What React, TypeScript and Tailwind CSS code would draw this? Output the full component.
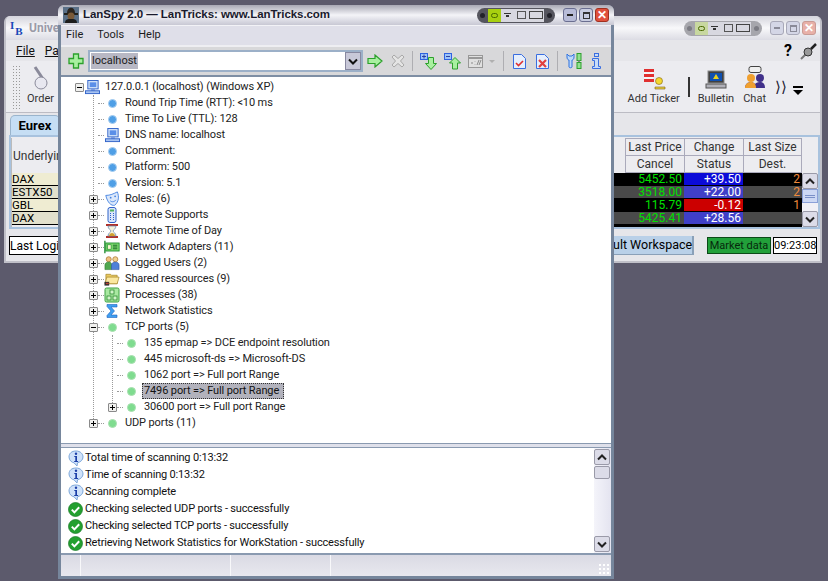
import React from 'react';

const UI = "font-['Liberation_Sans',sans-serif]";

// --- small drawn icons ---
function Dot({ green }: { green?: boolean }) {
  return (
    <span
      className={`block w-[9px] h-[9px] rounded-full border ${
        green ? 'bg-[#7fdc8f] border-[#a8e0b0]' : 'bg-[#4f9fe6] border-[#a6cdf0]'
      }`}
    />
  );
}

function Computer() {
  return (
    <svg width="15" height="15" viewBox="0 0 16 16">
      <rect x="3" y="0.5" width="11" height="9" fill="#cfe0f8" stroke="#2f62c8" />
      <rect x="5" y="2.5" width="7" height="5" fill="#5b8fe8" />
      <rect x="6.5" y="9.5" width="4" height="2" fill="#7c9be0" />
      <rect x="0.5" y="11.5" width="15" height="3" fill="#a8c4f2" stroke="#2f62c8" />
    </svg>
  );
}

function Mask() {
  return (
    <svg width="18" height="18" viewBox="0 0 18 18">
      <path d="M2 5 C7 5 11 3 15 1 C17 6 17 12 12 16 C8 17 4 13 2 5 Z" fill="#dbe8fb" stroke="#3f7fe0" />
      <circle cx="7.5" cy="7.5" r="1" fill="#3f7fe0" />
      <circle cx="12.5" cy="6" r="1" fill="#3f7fe0" />
      <path d="M7 11 C9 13 12 12 13.5 10" fill="none" stroke="#3f7fe0" />
    </svg>
  );
}

function Remote() {
  return (
    <svg width="16" height="16" viewBox="0 0 16 16">
      <rect x="4" y="0.5" width="8" height="15" rx="2" fill="#dbe6fb" stroke="#2f62c8" />
      <rect x="6" y="2.5" width="4" height="2" fill="#50b060" />
      <path d="M6 6.5h1M9 6.5h1M6 8.5h1M9 8.5h1M6 10.5h1M9 10.5h1M6 12.5h1M9 12.5h1" stroke="#2f62c8" />
    </svg>
  );
}

function Hourglass() {
  return (
    <svg width="16" height="16" viewBox="0 0 16 16">
      <path d="M2 1h12v2H2zM2 13h12v2H2z" fill="#b03028" />
      <path d="M4 3h8c0 3-3 4-3 5s3 2 3 5H4c0-3 3-4 3-5S4 6 4 3Z" fill="#f4f0d8" stroke="#5f7fb0" strokeWidth="0.7" />
      <path d="M5 13c0-2 2-3 3-3s3 1 3 3Z" fill="#d0a030" />
    </svg>
  );
}

function NetCard() {
  return (
    <svg width="18" height="16" viewBox="0 0 18 16">
      <path d="M1 1v14" stroke="#1c8a2c" strokeWidth="1.5" />
      <rect x="2" y="3.5" width="15" height="9" fill="#7fdc70" stroke="#1c8a2c" />
      <rect x="4" y="5.5" width="4" height="5" fill="#f6f6d0" stroke="#1c8a2c" strokeWidth="0.7" />
      <path d="M10 6h5M10 8h5M10 10h5" stroke="#116020" />
    </svg>
  );
}

function Users() {
  return (
    <svg width="17" height="16" viewBox="0 0 17 16">
      <circle cx="5" cy="4" r="2.7" fill="#f0c080" stroke="#a06a20" strokeWidth="0.7" />
      <circle cx="12" cy="4" r="2.7" fill="#f0d090" stroke="#a06a20" strokeWidth="0.7" />
      <path d="M1 15V10c0-2 2-3 4-3s3 1 3 3v5Z" fill="#50a850" stroke="#2f7a30" strokeWidth="0.6" />
      <path d="M8 15V10c0-2 2-3 4-3s4 1 4 3v5Z" fill="#4f80d8" stroke="#2f52a0" strokeWidth="0.6" />
    </svg>
  );
}

function Folder() {
  return (
    <svg width="17" height="16" viewBox="0 0 17 16">
      <path d="M2 3h5l1 1h6v9H2Z" fill="#e8c860" stroke="#a08020" strokeWidth="0.7" />
      <path d="M1 13l2-7h13l-2 7Z" fill="#fbe8a0" stroke="#a08020" strokeWidth="0.7" />
      <rect x="0.5" y="11" width="5" height="4" fill="#303030" />
      <rect x="2" y="12" width="3" height="1.5" fill="#c04030" />
    </svg>
  );
}

function Processes() {
  return (
    <svg width="16" height="16" viewBox="0 0 16 16">
      <rect x="1" y="1" width="14" height="14" rx="1.5" fill="#a8e8a0" stroke="#3ca040" />
      <rect x="6" y="3" width="4" height="4" fill="#d0f4c8" stroke="#2c8a30" strokeWidth="0.8" />
      <rect x="3" y="9" width="4" height="4" fill="#d0f4c8" stroke="#2c8a30" strokeWidth="0.8" />
      <rect x="9" y="9" width="4" height="4" fill="#d0f4c8" stroke="#2c8a30" strokeWidth="0.8" />
    </svg>
  );
}

function Sigma() {
  return (
    <svg width="16" height="16" viewBox="0 0 16 16">
      <path d="M3 1.500h10v2.500H7l3.500 4L7 12h6v2.500H3v-2l4-4.500-4-4.500Z" fill="#3f9ff0" stroke="#1f62c0" strokeWidth="0.6" />
    </svg>
  );
}

function InfoBubble() {
  return (
    <svg width="16" height="17" viewBox="0 0 16 17">
      <path d="M8 1C3.500 1 1 3.500 1 7s3 5.500 5 5.800L9 16l.5-3.200C12.500 12 15 10 15 7s-2.500-6-7-6Z" fill="#cfe2fa" stroke="#7ea8da" />
      <circle cx="8" cy="3.800" r="1.200" fill="#1c3fa8" />
      <path d="M6.300 6h2.700v5h1.100v1H6.200v-1h1.100V7H6.300Z" fill="#1c3fa8" />
    </svg>
  );
}

function CheckBall() {
  return (
    <svg width="15" height="15" viewBox="0 0 15 15">
      <circle cx="7.5" cy="7.5" r="7" fill="#23a02f" stroke="#1a7a28" strokeWidth="0.7" />
      <path d="M3.800 7.600l2.600 2.800 4.800-5.200" fill="none" stroke="#ffffff" strokeWidth="2" />
    </svg>
  );
}

function Expander({ open }: { open?: boolean }) {
  return (
    <span className="relative z-10 block w-[9px] h-[9px] bg-[#f0f0ee] border border-[#8a8a8a] rounded-[1px]">
      <span className="absolute left-[1px] top-[3px] w-[5px] h-px bg-black" />
      {!open && <span className="absolute left-[3px] top-[1px] w-px h-[5px] bg-black" />}
    </span>
  );
}

// --- tree ---
type Row = {
  text: string;
  depth: 0 | 1 | 2;
  icon: React.ReactNode;
  exp?: 'plus' | 'minus';
  selected?: boolean;
};

const rows: Row[] = [
  { text: '127.0.0.1 (localhost) (Windows XP)', depth: 0, icon: <Computer />, exp: 'minus' },
  { text: 'Round Trip Time (RTT): <10 ms', depth: 1, icon: <Dot /> },
  { text: 'Time To Live (TTL): 128', depth: 1, icon: <Dot /> },
  { text: 'DNS name: localhost', depth: 1, icon: <Computer /> },
  { text: 'Comment:', depth: 1, icon: <Dot /> },
  { text: 'Platform: 500', depth: 1, icon: <Dot /> },
  { text: 'Version: 5.1', depth: 1, icon: <Dot /> },
  { text: 'Roles: (6)', depth: 1, icon: <Mask />, exp: 'plus' },
  { text: 'Remote Supports', depth: 1, icon: <Remote />, exp: 'plus' },
  { text: 'Remote Time of Day', depth: 1, icon: <Hourglass />, exp: 'plus' },
  { text: 'Network Adapters (11)', depth: 1, icon: <NetCard />, exp: 'plus' },
  { text: 'Logged Users (2)', depth: 1, icon: <Users />, exp: 'plus' },
  { text: 'Shared ressources (9)', depth: 1, icon: <Folder />, exp: 'plus' },
  { text: 'Processes (38)', depth: 1, icon: <Processes />, exp: 'plus' },
  { text: 'Network Statistics', depth: 1, icon: <Sigma />, exp: 'plus' },
  { text: 'TCP ports (5)', depth: 1, icon: <Dot green />, exp: 'minus' },
  { text: '135 epmap => DCE endpoint resolution', depth: 2, icon: <Dot green /> },
  { text: '445 microsoft-ds => Microsoft-DS', depth: 2, icon: <Dot green /> },
  { text: '1062 port => Full port Range', depth: 2, icon: <Dot green /> },
  { text: '7496 port => Full port Range', depth: 2, icon: <Dot green />, selected: true },
  { text: '30600 port => Full port Range', depth: 2, icon: <Dot green />, exp: 'plus' },
  { text: 'UDP ports (11)', depth: 1, icon: <Dot green />, exp: 'plus' },
];

function TreeRow({ row }: { row: Row }) {
  const pad = row.depth === 0 ? 'pl-[13px]' : row.depth === 1 ? 'pl-[27px]' : 'pl-[46px]';
  return (
    <div className={`flex items-center h-4 ${pad}`}>
      <span className="relative w-[10px] h-4 flex items-center justify-center shrink-0">
        {row.exp && <Expander open={row.exp === 'minus'} />}
      </span>
      {row.depth > 0 && (
        <span className="w-[6px] h-px border-t border-dotted border-[#9a9a9a] shrink-0" />
      )}
      <span className="w-4 h-4 flex items-center justify-center shrink-0">{row.icon}</span>
      {row.selected ? (
        <span className="ml-[3px] w-[142px] h-4 pl-[1px] leading-[14px] bg-[#b2b2bc] border border-dotted border-[#333] text-[#111] whitespace-nowrap">
          {row.text}
        </span>
      ) : (
        <span className="ml-[5px] whitespace-nowrap">{row.text}</span>
      )}
    </div>
  );
}

// --- toolbar icons of the front window ---
function ToolPlus() {
  return (
    <svg width="16" height="16" viewBox="0 0 16 16">
      <path d="M5.500 1h5v4.500H15v5h-4.500V15h-5v-4.500H1v-5h4.500Z" fill="#a8f0a0" stroke="#2ca02c" strokeWidth="1.300" />
    </svg>
  );
}
function ToolGo() {
  return (
    <svg width="16" height="14" viewBox="0 0 16 14">
      <path d="M1 4.500h7V1l7 6-7 6V9.500H1Z" fill="#a8f0a0" stroke="#2ca02c" strokeWidth="1.200" />
    </svg>
  );
}
function ToolStop() {
  return (
    <svg width="14" height="14" viewBox="0 0 14 14">
      <path d="M1 3l2-2 4 3.500L11 1l2 2-3.500 4L13 11l-2 2-4-3.500L3 13l-2-2 3.500-4Z" fill="#e4e4e4" stroke="#a8a8a8" />
    </svg>
  );
}
function ToolDown({ up }: { up?: boolean }) {
  return (
    <svg width="17" height="17" viewBox="0 0 17 17">
      <rect x="0.500" y="0.500" width="7" height="6" fill="#9cc4f8" stroke="#2f62e0" />
      <path d="M2 3.500h4" stroke="#2f3fa0" />
      {!up && <path d="M4 1.500v4" stroke="#2f3fa0" />}
      {up ? (
        <path d="M11 4.500l5.500 5.500h-3v6h-5v-6h-3Z" fill="#a8f0a0" stroke="#2ca02c" />
      ) : (
        <path d="M8.500 4.500h5v6h3l-5.500 6-5.500-6h3Z" fill="#a8f0a0" stroke="#2ca02c" />
      )}
    </svg>
  );
}
function ToolCmd() {
  return (
    <svg width="15" height="13" viewBox="0 0 15 13">
      <rect x="0.500" y="0.500" width="14" height="12" fill="#e0e0e0" stroke="#989898" />
      <path d="M0.500 3h14" stroke="#989898" strokeWidth="2" />
      <path d="M3 8h2M7 6.500v.5M7 9v.5M9 10l2-5M11 10l2-5" stroke="#8a8a8a" />
    </svg>
  );
}
function ToolDoc({ bad }: { bad?: boolean }) {
  return (
    <svg width="13" height="15" viewBox="0 0 13 15">
      <path d="M0.500 0.500h8l4 4v10h-12Z" fill="#e6effc" stroke="#3a6ee0" />
      {bad ? (
        <path d="M3 6l7 7M10 6l-7 7" stroke="#e04040" strokeWidth="2.200" />
      ) : (
        <path d="M3 9l2.500 2.500L10 7" fill="none" stroke="#e03030" strokeWidth="1.600" />
      )}
    </svg>
  );
}
function ToolTools() {
  return (
    <svg width="18" height="16" viewBox="0 0 18 16">
      <path d="M1 1v3c0 2 1 3 2 3v7c0 1 3 1 3 0V7c1 0 2-1 2-3V1L6 3H3Z" fill="#bcd8f8" stroke="#2f72e0" />
      <rect x="11" y="0.500" width="4" height="7" fill="#90e090" stroke="#2ca02c" />
      <rect x="12" y="7.500" width="2" height="2" fill="#888" />
      <rect x="11" y="9.500" width="4" height="6" fill="#90e090" stroke="#2ca02c" />
    </svg>
  );
}
function ToolInfo() {
  return (
    <svg width="11" height="16" viewBox="0 0 11 16">
      <rect x="3.500" y="0.500" width="4" height="3" fill="#c8dcf8" stroke="#3a6ee0" />
      <path d="M1.500 5.500h6v8h2v2h-8v-2h2v-6h-2Z" fill="#c8dcf8" stroke="#3a6ee0" />
    </svg>
  );
}

function ToolSep() {
  return <span className="block w-px h-[20px] bg-[#aeaeb2] shrink-0" />;
}

function NvidiaBar({ faded }: { faded?: boolean }) {
  return (
    <div className={`flex items-center h-[15px] w-[78px] rounded-full px-[3px] ${faded ? 'bg-[#a6a6ac]' : 'bg-[#55555e]'}`}>
      <span className={`w-[5px] h-[5px] rounded-full ${faded ? 'bg-[#7c7c84]' : 'bg-[#22222a]'}`} />
      <span className={`ml-[3px] w-[13px] h-[13px] ${faded ? 'bg-[#c8d8a0]' : 'bg-[#a8d010]'} flex items-center justify-center`}>
        <span className="w-[7px] h-[5px] border border-[#4a6a00] rounded-full" />
      </span>
      <span className="w-[13px] h-[13px] bg-[#d8d8e0] flex flex-col items-center justify-center gap-px">
        <span className="w-[7px] h-px bg-[#333]" />
        <span className="w-[3px] h-[2px] bg-[#333]" />
      </span>
      <span className="w-[14px] h-[13px] bg-[#d8d8e0] flex items-center justify-center">
        <span className="w-[9px] h-[8px] border border-[#555]" />
      </span>
      <span className="w-[16px] h-[13px] bg-[#d8d8e0] flex items-center justify-center">
        <span className="w-[14px] h-[8px] border border-[#444]" />
      </span>
      <span className={`ml-auto w-[5px] h-[5px] rounded-full ${faded ? 'bg-[#7c7c84]' : 'bg-[#22222a]'}`} />
    </div>
  );
}

function WinButtons({ faded }: { faded?: boolean }) {
  const base = 'w-[14px] h-[14px] rounded-[3px] border flex items-center justify-center';
  return (
    <div className="flex items-center gap-[2px]">
      <span className={`${base} ${faded ? 'bg-[#d4d6e6] border-[#a8a8b8]' : 'bg-[#b8bcd8] border-[#6a6e90]'}`}>
        <span className={`w-[6px] h-[2px] ${faded ? 'bg-[#8a8a98]' : 'bg-[#222]'}`} />
      </span>
      <span className={`${base} ${faded ? 'bg-[#d4d6e6] border-[#a8a8b8]' : 'bg-[#c8cce0] border-[#6a6e90]'}`}>
        <span className={`w-[7px] h-[7px] border border-t-2 ${faded ? 'border-[#8a8a98]' : 'border-[#333]'}`} />
      </span>
      <span className={`${base} font-bold text-[12px] leading-none ${faded ? 'bg-[#e8b0a8] border-[#c89a94] text-white' : 'bg-[#e0503c] border-[#a03020] text-white'}`}>
        ✕
      </span>
    </div>
  );
}

function ScrollBtn({ down }: { down?: boolean }) {
  return (
    <span className="w-[16px] h-[16px] bg-[#dcdce8] border border-[#9a9aa8] rounded-[2px] flex items-center justify-center shrink-0">
      <svg width="10" height="7" viewBox="0 0 10 7">
        <path d={down ? 'M1 1.500l4 4 4-4' : 'M1 5.500l4-4 4 4'} fill="none" stroke="#222" strokeWidth="2" />
      </svg>
    </span>
  );
}

// --- window behind ---
const gridRows = [
  { name: 'DAX', bg: 'bg-[#efecd2]', price: '5452.50', change: '+39.50', cc: 'bg-[#0b0bd8]', size: '2', row: 'bg-black' },
  { name: 'ESTX50', bg: 'bg-[#e2e0cc]', price: '3518.00', change: '+22.00', cc: 'bg-[#3f3fc8]', size: '2', row: 'bg-[#4a4a4a]' },
  { name: 'GBL', bg: 'bg-[#efecd2]', price: '115.79', change: '-0.12', cc: 'bg-[#cc0000]', size: '1', row: 'bg-black' },
  { name: 'DAX', bg: 'bg-[#e2e0cc]', price: '5425.41', change: '+28.56', cc: 'bg-[#3f3fc8]', size: '', row: 'bg-[#4a4a4a]' },
];

function ToolItem({ label, children }: { label: string; children: React.ReactNode }) {
  return (
    <div className="flex flex-col items-center gap-[2px]">
      <span className="h-[29px] flex items-end justify-center">{children}</span>
      <span className="leading-[14px] whitespace-nowrap">{label}</span>
    </div>
  );
}

function BackWindow() {
  return (
    <div className="absolute left-[4px] top-[16px] w-[818px] h-[247px] rounded-t-[6px] bg-[#e6e6ea] border-x-[2px] border-b-[2px] border-[#c0c0c8] flex flex-col text-[#333] text-[11px] font-['Roboto',sans-serif] overflow-hidden">
      {/* title */}
      <div className="h-[24px] bg-gradient-to-b from-[#d4d4dc] via-[#f8f8fa] to-[#dcdce4] flex items-center pl-[4px] pr-[4px] shrink-0">
        <span className="flex w-[19px] h-[17px] justify-start font-['Liberation_Serif',serif] text-[11px] text-[#1848b8] font-bold leading-none">
          <span className="self-start">I</span>
          <span className="self-end ml-[1px]">B</span>
        </span>
        <span className="font-bold text-[#9a9aa8] text-[12px]">Unive</span>
        <div className="ml-auto flex items-center gap-[8px]">
          <NvidiaBar faded />
          <WinButtons faded />
        </div>
      </div>
      {/* menu */}
      <div className="h-[21px] bg-[#e6e6ea] flex items-center pl-[10px] pr-[2px] text-[12px] text-[#111] shrink-0">
        <span className="underline">File</span>
        <span className="ml-[10px] underline">Pa</span>
        <div className="ml-auto flex items-center gap-[8px]">
          <span className="font-bold text-[16px] text-black leading-none">?</span>
          <svg width="18" height="18" viewBox="0 0 18 18">
            <path d="M1 17l6-6" stroke="#777" strokeWidth="2" />
            <circle cx="8" cy="10" r="4" fill="#999" stroke="#333" />
            <path d="M11 7l5-5" stroke="#222" strokeWidth="2.500" />
          </svg>
        </div>
      </div>
      {/* toolbar */}
      <div className="h-[52px] bg-[#ececf0] border-b border-[#bcbcc4] flex items-start pl-[6px] pr-[17px] shrink-0">
        <div className="self-center w-[9px] h-[44px] bg-[radial-gradient(#999_1px,transparent_1px)] bg-[length:3px_3px]" />
        <div className="ml-[6px]">
          <ToolItem label="Order">
            <svg width="20" height="24" viewBox="0 0 20 24">
              <path d="M5 1l8 12" stroke="#8a8a9a" strokeWidth="3" />
              <circle cx="11" cy="17" r="6" fill="#e8e8f0" stroke="#8a8a9a" />
            </svg>
          </ToolItem>
        </div>
        <div className="ml-auto flex items-start">
          <ToolItem label="Add Ticker">
            <svg width="24" height="22" viewBox="0 0 24 22">
              <path d="M2 1h10v3H2zM2 6h10v3H2zM2 11h10v3H2z" fill="#e03030" />
              <path d="M2 5h9M2 10h9" stroke="#fff" />
              <circle cx="17" cy="13" r="3.500" fill="#f4d830" stroke="#806010" strokeWidth="0.600" />
              <path d="M13 21v-2h10v2Z" fill="#e8d040" stroke="#806010" strokeWidth="0.600" />
            </svg>
          </ToolItem>
          <span className="w-[2px] h-[20px] mt-[16px] bg-[#333] mx-[8px]" />
          <ToolItem label="Bulletin">
            <svg width="22" height="20" viewBox="0 0 22 20">
              <rect x="3" y="1" width="16" height="12" fill="#404040" stroke="#888" />
              <rect x="5" y="3" width="12" height="8" fill="#1050b0" />
              <path d="M11 4l3 5H8Z" fill="#e8d020" />
              <rect x="1" y="14" width="20" height="4" fill="#b0b0b8" stroke="#555" />
            </svg>
          </ToolItem>
          <div className="ml-[9px]">
            <ToolItem label="Chat">
              <svg width="22" height="24" viewBox="0 0 22 24">
                <rect x="5" y="0.500" width="12" height="6" rx="2" fill="#f0f0f0" stroke="#444" />
                <circle cx="7" cy="12" r="4" fill="#f0a030" />
                <circle cx="16" cy="12" r="4" fill="#40308a" />
                <path d="M1 22c0-4 3-6 6-6 2 0 3 1 4 2 1-1 2-2 5-2 3 0 5 2 5 6Z" fill="#40308a" />
                <path d="M1 22c0-4 3-6 6-6s5 2 5 6Z" fill="#f0a030" />
              </svg>
            </ToolItem>
          </div>
          <span className="ml-[9px] mt-[19px] text-[15px] text-[#223] leading-none">⟩⟩</span>
          <span className="ml-[6px] mt-[25px] flex flex-col items-center gap-[2px] w-[10px]">
            <span className="w-[10px] h-[2px] bg-black" />
            <span className="w-0 h-0 border-x-[5px] border-x-transparent border-t-[5px] border-t-black" />
          </span>
        </div>
      </div>
      {/* tabs + grid */}
      <div className="flex-1 flex flex-col pl-[3px] pt-[2px] min-h-0">
        <div className="ml-[1px] h-[20px] w-[50px] bg-[#c6def4] rounded-t-[5px] border border-b-0 border-[#9ab4cc] font-bold text-[13px] text-black flex items-center justify-center shrink-0">
          Eurex
        </div>
        <div className="h-[94px] border-2 border-[#a8c2de] bg-[#ececf0] flex justify-between shrink-0 pt-[1px]">
          <div className="w-[60px] border-l border-[#bbb]">
            <div className="h-[35px] leading-[37px] text-[12px] pl-[1px] whitespace-nowrap">Underlying</div>
            {gridRows.map((r, i) => (
              <div key={i} className={`h-[13px] leading-[12px] text-[11.5px] text-black border-b border-black ${r.bg}`}>
                {r.name}
              </div>
            ))}
          </div>
          <div className="flex">
            <div className="w-[193px] flex flex-col">
              <div className="grid grid-cols-[60px_59px_58px] text-center text-[12px] leading-[16px] h-[35px] ml-[16px] w-[177px]">
                <span className="border border-[#aab] border-b-0">Last Price</span>
                <span className="border-t border-r border-[#aab]">Change</span>
                <span className="border-t border-r border-[#aab]">Last Size</span>
                <span className="border border-[#aab]">Cancel</span>
                <span className="border border-l-0 border-[#aab]">Status</span>
                <span className="border border-l-0 border-[#aab]">Dest.</span>
              </div>
              <div className="flex-1 bg-black text-[12px] leading-[12px]">
                {gridRows.map((r, i) => (
                  <div key={i} className={`flex h-[13px] border-b border-black ${r.row}`}>
                    <span className="w-[75px] text-right pr-[2px] text-[#00e000]">{r.price}</span>
                    <span className={`w-[59px] text-right pr-[2px] text-white ${r.cc}`}>{r.change}</span>
                    <span className="w-[59px] text-right pr-[2px] text-[#f08a3c]">{r.size}</span>
                  </div>
                ))}
              </div>
            </div>
            <div className="w-[16px] flex flex-col pt-[35px]">
              <div className="flex-1 flex flex-col bg-[#f0f0f6]">
                <ScrollBtn />
                <span className="h-[14px] bg-[#ccd8f4] border border-[#8aa0d8] flex flex-col gap-px items-center justify-center">
                  <span className="w-[10px] h-px bg-[#7a90c8]" />
                  <span className="w-[10px] h-px bg-[#7a90c8]" />
                </span>
                <span className="flex-1" />
                <ScrollBtn down />
              </div>
            </div>
          </div>
        </div>
        {/* status */}
        <div className="flex-1 flex items-center justify-between text-[12px] text-black pt-[1px] pr-[3px]">
          <span className="w-[50px] h-[19px] border border-black bg-white leading-[18px] whitespace-nowrap">Last Login</span>
          <div className="flex items-center">
            <span className="w-[81px] h-[19px] bg-[#b9d0e8] border-r-2 border-b border-[#8aa0b8] text-[12.500px] text-right pr-[1px] leading-[18px] whitespace-nowrap">ult Workspace</span>
            <span className="ml-[13px] w-[64px] h-[17px] bg-[#22a03a] border border-[#0c4a18] text-center text-[11px] leading-[15px] text-[#06280c]">Market data</span>
            <span className="ml-[2px] w-[44px] h-[17px] bg-white border border-black text-center text-[11px] leading-[15px]">09:23:08</span>
          </div>
        </div>
      </div>
    </div>
  );
}

// --- LanSpy window ---
const logs = [
  { text: 'Total time of scanning 0:13:32', info: true },
  { text: 'Time of scanning 0:13:32', info: true },
  { text: 'Scanning complete', info: true },
  { text: 'Checking selected UDP ports - successfully' },
  { text: 'Checking selected TCP ports - successfully' },
  { text: 'Retrieving Network Statistics for WorkStation - successfully' },
];

function LanSpyWindow() {
  return (
    <div className="absolute left-[58px] top-[5px] w-[556px] h-[574px] rounded-t-[6px] bg-[#dfdfe9] border-[3px] border-t-0 border-[#76869c] flex flex-col text-[#1c1c1c] text-[11px] font-['Roboto',sans-serif]">
      {/* title */}
      <div className="h-[20px] rounded-t-[6px] -mx-[3px] px-[5px] bg-gradient-to-b from-[#a8a8b4] via-[#f4f4f8] to-[#c8c8d4] flex items-center shrink-0">
        <svg width="16" height="16" viewBox="0 0 16 16" className="shrink-0">
          <rect width="16" height="16" fill="#5a7088" />
          <path d="M1 6h14v2H1Z" fill="#20201c" />
          <path d="M4 6c0-7 8-7 8 0Z" fill="#2c2620" />
          <circle cx="8" cy="9" r="3.500" fill="#7a5a38" />
          <path d="M2 16c0-4 3-4 6-4s6 0 6 4Z" fill="#1c1c1c" />
        </svg>
        <span className={`ml-[4px] font-bold text-[11.5px] tracking-[-0.06px] text-[#1a1a2c] whitespace-nowrap ${UI}`}>LanSpy 2.0 — LanTricks: www.LanTricks.com</span>
        <div className="ml-auto flex items-center gap-[8px]">
          <NvidiaBar />
          <WinButtons />
        </div>
      </div>
      {/* menu */}
      <div className="h-[20px] flex items-center gap-[14px] pl-[5px] shrink-0 border-t border-[#f2f2f6]">
        <span>File</span>
        <span>Tools</span>
        <span>Help</span>
      </div>
      {/* toolbar */}
      <div className="h-[32px] bg-[#d8d8da] border-y-2 border-[#eeeef2] border-b-[#7e8ea4] flex items-center pl-[7px] shrink-0">
        <ToolPlus />
        <div className="ml-[4px] w-[275px] h-[22px] bg-white border-2 border-[#9cb0c8] flex items-center justify-between pl-[1px]">
          <span className="bg-[#b8b8c4] text-[#1c1c1c] px-px leading-[16px]">localhost</span>
          <span className="w-[16px] h-[18px] bg-[#c8c8d8] border border-[#8888a0] flex items-center justify-center">
            <svg width="10" height="7" viewBox="0 0 10 7">
              <path d="M1 1.500l4 4 4-4" fill="none" stroke="#111" strokeWidth="2" />
            </svg>
          </span>
        </div>
        <span className="ml-[4px]"><ToolGo /></span>
        <span className="ml-[8px]"><ToolStop /></span>
        <span className="ml-[7px]"><ToolSep /></span>
        <span className="ml-[7px]"><ToolDown /></span>
        <span className="ml-[7px]"><ToolDown up /></span>
        <span className="ml-[7px]"><ToolCmd /></span>
        <span className="ml-[6px] w-0 h-0 border-x-[3px] border-x-transparent border-t-[3px] border-t-[#b0b0b0]" />
        <span className="ml-[8px]"><ToolSep /></span>
        <span className="ml-[9px]"><ToolDoc /></span>
        <span className="ml-[10px]"><ToolDoc bad /></span>
        <span className="ml-[8px]"><ToolSep /></span>
        <span className="ml-[8px]"><ToolTools /></span>
        <span className="ml-[7px]"><ToolInfo /></span>
      </div>
      {/* tree */}
      <div className="relative h-[366px] bg-white pt-[2px] shrink-0 text-[11px] tracking-[-0.12px] text-[#222] overflow-hidden">
        <span className="absolute left-[32px] top-[18px] h-[328px] border-l border-dotted border-[#9a9a9a]" />
        <span className="absolute left-[51px] top-[258px] h-[72px] border-l border-dotted border-[#9a9a9a]" />
        {rows.map((r, i) => (
          <TreeRow key={i} row={r} />
        ))}
      </div>
      {/* splitter */}
      <div className="h-[5px] bg-[#dfe0ea] border-y border-[#8a9ab0] shrink-0" />
      {/* log */}
      <div className="h-[107px] bg-white flex shrink-0 text-[11px] tracking-[-0.17px] text-[#111] border-b-2 border-[#8a9ab0]">
        <div className="flex-1 pt-[2px] pl-[6px]">
          {logs.map((l, i) => (
            <div key={i} className="flex items-center h-[17px]">
              <span className="w-[17px] flex items-center justify-center shrink-0">
                {l.info ? <InfoBubble /> : <CheckBall />}
              </span>
              <span className="ml-[1px] whitespace-nowrap">{l.text}</span>
            </div>
          ))}
        </div>
        <div className="w-[17px] flex flex-col bg-gradient-to-r from-[#f4f4fa] to-[#e4e4f0] pt-[1px] pb-[1px]">
          <ScrollBtn />
          <span className="mt-[1px] h-[13px] w-[16px] bg-[#dcdce8] border border-[#9a9aa8] rounded-[2px]" />
          <span className="flex-1" />
          <ScrollBtn down />
        </div>
      </div>
      {/* status bar */}
      <div className="flex-1 flex bg-gradient-to-b from-[#dadae4] to-[#e8e8ee] relative">
        <span className="w-[20px] border-r border-[#f8f8fa]" />
        <span className="w-[150px] border-r border-[#f8f8fa]" />
        <span className="w-[100px] border-r border-[#f8f8fa]" />
        <span className="absolute right-[1px] bottom-[1px] w-[12px] h-[12px] bg-[radial-gradient(#ffffff_1px,transparent_1px)] bg-[length:4px_4px]" />
      </div>
    </div>
  );
}

export default function App() {
  return (
    <div className={`relative w-[828px] h-[581px] overflow-hidden bg-[#5c5a6c] ${UI}`}>
      <BackWindow />
      <LanSpyWindow />
    </div>
  );
}
